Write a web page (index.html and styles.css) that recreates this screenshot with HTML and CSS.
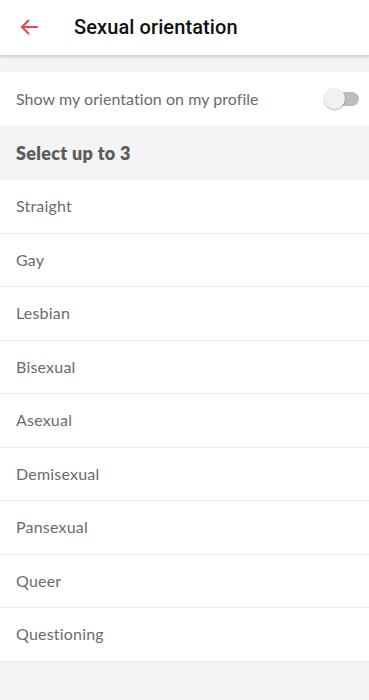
FILE: index.html
```html
<!DOCTYPE html>
<html>
<head>
<meta charset="utf-8">
<link rel="stylesheet" href="styles.css">
</head>
<body>
<div class="app">
  <header class="topbar">
    <svg class="back" width="20" height="20" viewBox="0 0 20 20" fill="none" stroke="#e9464e" stroke-width="2" stroke-linecap="round" stroke-linejoin="round">
      <path d="M18 10H3"/>
      <path d="M9.5 3.5L3 10l6.5 6.5"/>
    </svg>
    <h1 class="title">Sexual orientation</h1>
  </header>
  <div class="spacer"></div>
  <div class="toggle-row">
    <span class="label">Show my orientation on my profile</span>
    <span class="switch"><span class="track"></span><span class="knob"></span></span>
  </div>
  <div class="section">Select up to 3</div>
  <ul class="list">
    <li class="item">Straight</li>
    <li class="item">Gay</li>
    <li class="item">Lesbian</li>
    <li class="item">Bisexual</li>
    <li class="item">Asexual</li>
    <li class="item">Demisexual</li>
    <li class="item">Pansexual</li>
    <li class="item">Queer</li>
    <li class="item">Questioning</li>
  </ul>
</div>
</body>
</html>
```
FILE: styles.css
```css
* { box-sizing: border-box; }
html, body { margin: 0; padding: 0; }
body { background: #f4f4f4; font-family: Lato, "Open Sans", sans-serif; }
.app { width: 369px; min-height: 700px; background: #f4f4f4; }
.topbar {
  height: 56px;
  background: #fff;
  display: flex;
  align-items: center;
  padding-left: 19px;
  border-bottom: 1px solid #d0d0d0;
  box-shadow: 0 1px 3px rgba(0,0,0,0.18);
  position: relative;
  z-index: 1;
}
.back { flex: none; margin-top: -2px; }
.title {
  margin: 0 0 0 35px;
  font-family: Roboto, sans-serif;
  font-weight: 500;
  font-size: 20px;
  color: #111;
  letter-spacing: 0.1px;
  margin-top: -2px;
}
.spacer { height: 16px; }
.toggle-row {
  height: 53px;
  background: #fff;
  display: flex;
  align-items: center;
  justify-content: space-between;
  padding: 0 10px 0 16px;
}
.label { font-size: 16px; color: #6b6b6b; letter-spacing: 0.05px; }
.switch { position: relative; width: 35px; height: 22px; display: block; }
.track {
  position: absolute; left: 4px; top: 4px; width: 31px; height: 14px;
  border-radius: 7px; background: #bdbdbd;
}
.knob {
  position: absolute; left: 0; top: 0; width: 21px; height: 21px;
  border-radius: 50%; background: #f1f1f1;
  box-shadow: 0 1px 2px rgba(0,0,0,0.3);
}
.section {
  height: 55px;
  display: flex;
  align-items: center;
  padding-left: 16px;
  font-size: 18px;
  font-weight: 800;
  color: #5c5c5c;
  letter-spacing: 0.3px;
  background: #f4f4f4;
}
.list { list-style: none; margin: 0; padding: 0; background: #fff; }
.item {
  height: 53.5px;
  display: flex;
  align-items: center;
  padding-left: 16px;
  padding-bottom: 1px;
  font-size: 16px;
  color: #6b6b6b;
  letter-spacing: 0.2px;
  border-bottom: 1px solid #ececec;
}
```
